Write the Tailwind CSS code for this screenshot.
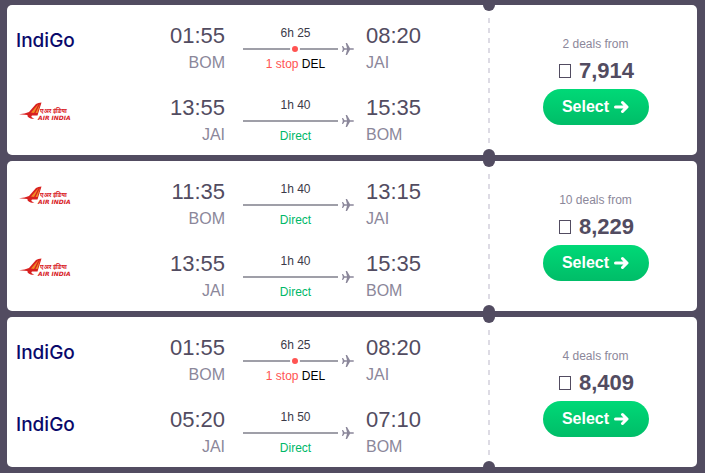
<!DOCTYPE html>
<html lang="en">
<head>
  <meta charset="UTF-8" />
  <meta name="viewport" content="width=device-width, initial-scale=1.0" />
  <title>Flights BOM - JAI</title>
  <script src="https://cdn.jsdelivr.net/npm/@tailwindcss/browser@4"></script>
</head>
<body class="bg-[#524c61] min-h-screen font-['Liberation_Sans',Arial,sans-serif] text-[#524c61]">

  <main id="results" class="flex flex-col gap-1.5 pt-[5px] pb-1.5 pl-[7px] pr-2"></main>

  <script>
    const flights = [
      {
        deals: 2, price: "7,914",
        legs: [
          { airline: "indigo", dep: "01:55", from: "BOM", arr: "08:20", to: "JAI", time: "6h 25", stop: "DEL" },
          { airline: "airindia", dep: "13:55", from: "JAI", arr: "15:35", to: "BOM", time: "1h 40" }
        ]
      },
      {
        deals: 10, price: "8,229",
        legs: [
          { airline: "airindia", dep: "11:35", from: "BOM", arr: "13:15", to: "JAI", time: "1h 40" },
          { airline: "airindia", dep: "13:55", from: "JAI", arr: "15:35", to: "BOM", time: "1h 40" }
        ]
      },
      {
        deals: 4, price: "8,409",
        legs: [
          { airline: "indigo", dep: "01:55", from: "BOM", arr: "08:20", to: "JAI", time: "6h 25", stop: "DEL" },
          { airline: "indigo", dep: "05:20", from: "JAI", arr: "07:10", to: "BOM", time: "1h 50" }
        ]
      }
    ];

    const logos = {
      indigo: `<span class="pt-0.5 font-[Inter,sans-serif] font-medium text-[19px] leading-9 text-[#09096b]">IndiGo</span>`,
      airindia: `
        <svg class="w-[58px] h-9" viewBox="0 0 58 36">
          <path d="M3 20.300 Q9 20 13 18 L20 10 Q22 8.500 25.500 8.500 L21.500 21.500 H16 C14.500 22.500 16 24 18.500 24.600 C14 25 11 23 11.500 20.900 Z" fill="#d8201f" />
          <path d="M15 18.500 L22.500 10 L18 19 Z M19.500 19 L24 10 L21.500 19 Z" fill="#f08a24" />
          <text x="24" y="19" font-family="Noto Sans, sans-serif" font-size="6" font-weight="700" font-style="italic" fill="#d8201f">एअर इंडिया</text>
          <text x="22" y="26" font-family="DejaVu Sans, sans-serif" font-size="6" font-weight="700" font-style="italic" fill="#d8201f">AIR INDIA</text>
        </svg>`
    };

    function renderLeg(leg) {
      return `
        <div class="flex">
          <div class="flex-1 h-9 flex items-center">${logos[leg.airline]}</div>
          <div class="text-right">
            <div class="text-[22px] leading-[27px]">${leg.dep}</div>
            <div class="text-base leading-[27px] text-[#8b879a]">${leg.from}</div>
          </div>
          <div class="w-[111px] ml-[18px] mr-3 text-xs text-center">
            <div class="pt-0.5 pr-1.5 leading-[18px] text-[#3c3a48]">${leg.time}</div>
            <div class="flex items-center justify-between h-3.5">
              <div class="w-[95px] h-0.5 bg-[#9f9fa8] flex items-center pl-[49px]">
                ${leg.stop ? `<span class="size-1.5 rounded-full bg-[#ff5452] ring-2 ring-white"></span>` : ""}
              </div>
              <svg class="size-3" viewBox="0 0 12 12" fill="#8b879a">
                <path d="M0 3 H1 L2.500 5.300 H5 L3.700 0 H5 L8 5.300 H11 Q12 5.500 12 6 Q12 6.500 11 6.700 H8 L5 12 H3.700 L5 6.700 H2.500 L1 9 H0 L0.800 6 Z" />
              </svg>
            </div>
            <div class="pr-1.5 leading-4">
              ${leg.stop
                ? `<span class="text-[#ff5452]">1 stop</span> <span class="text-black">${leg.stop}</span>`
                : `<span class="text-[#00b868]">Direct</span>`}
            </div>
          </div>
          <div class="w-[124px]">
            <div class="text-[22px] leading-[27px]">${leg.arr}</div>
            <div class="text-base leading-[27px] text-[#8b879a]">${leg.to}</div>
          </div>
        </div>`;
    }

    function renderCard(f) {
      return `
        <article class="flex bg-white rounded-[5px]">
          <div class="w-[70%] flex flex-col gap-[18px] pl-[9px] pt-[17px] pb-[7px]">
            ${f.legs.map(renderLeg).join("")}
          </div>
          <div class="relative flex-1 flex flex-col items-center justify-center pl-1 pt-px">
            <!-- ticket perforation -->
            <div class="absolute -left-0.5 top-[13px] bottom-3 w-0.5 bg-[repeating-linear-gradient(to_bottom,#dddbe4_0_5px,transparent_5px_10px)]"></div>
            <div class="absolute -left-[7px] -top-1.5 size-3 rounded-full bg-[#524c61]"></div>
            <div class="absolute -left-[7px] -bottom-1.5 size-3 rounded-full bg-[#524c61]"></div>

            <div class="text-xs leading-4 text-[#8b879a]">${f.deals} deals from</div>
            <div class="flex items-center pl-0.5 text-[22px] leading-[37px] font-bold">
              <span class="w-3 h-3.5 mr-2 border border-[#524c61]"></span>${f.price}
            </div>
            <button type="button" class="w-[106px] h-9 rounded-full bg-linear-to-b from-[#00d977] to-[#00bd68] text-white text-base font-bold flex items-center justify-center gap-1 cursor-pointer">
              Select
              <svg class="w-4 h-3.5" viewBox="0 0 16 14" fill="none" stroke="currentColor" stroke-width="3" stroke-linecap="round" stroke-linejoin="round">
                <path d="M2.500 7 H13 M9.500 2.500 L14 7 L9.500 11.500" />
              </svg>
            </button>
          </div>
        </article>`;
    }

    document.getElementById("results").innerHTML = flights.map(renderCard).join("");
  </script>
</body>
</html>
